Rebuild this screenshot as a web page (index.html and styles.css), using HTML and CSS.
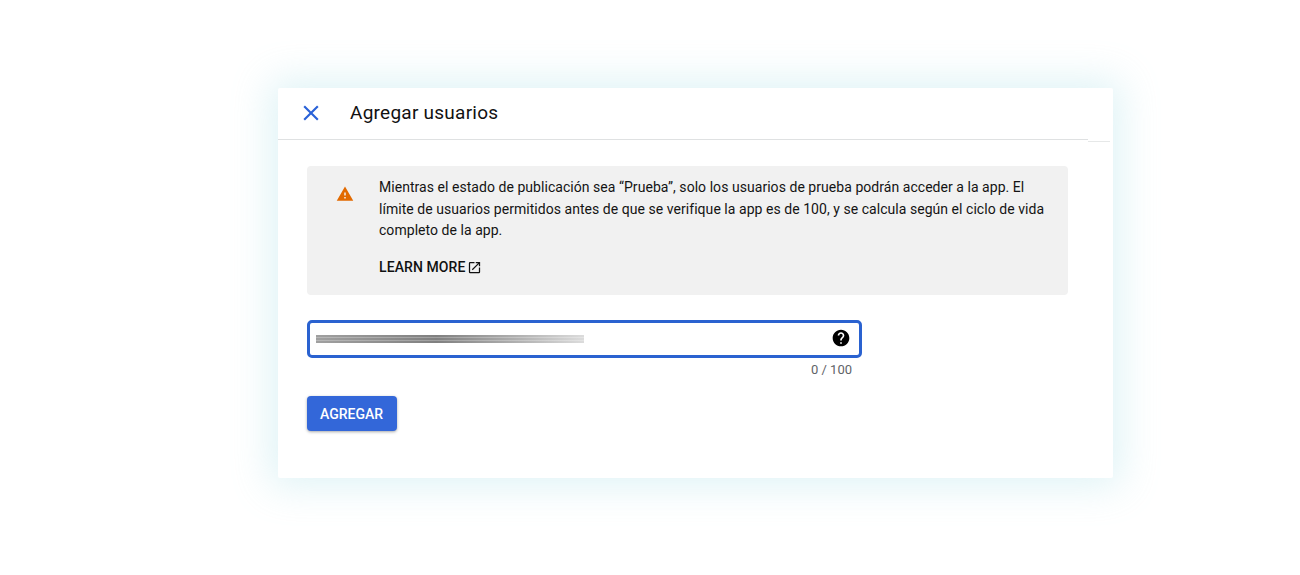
FILE: index.html
```html
<!DOCTYPE html>
<html lang="es">
<head>
<meta charset="utf-8">
<title>Agregar usuarios</title>
<link rel="stylesheet" href="styles.css">
</head>
<body>
<section class="card">
  <header class="header">
    <svg class="close" width="26" height="26" viewBox="0 0 24 24"><path d="M19 6.41 17.59 5 12 10.59 6.41 5 5 6.41 10.59 12 5 17.59 6.41 19 12 13.41 17.59 19 19 17.59 13.41 12z"/></svg>
    <h1 class="title">Agregar usuarios</h1>
  </header>
  <span class="ghost-line"></span>
  <div class="body">
    <div class="notice">
      <svg class="warn" width="18" height="18" viewBox="0 0 24 24"><path d="M1 21h22L12 2 1 21zm12-3h-2v-2h2v2zm0-4h-2v-4h2v4z"/></svg>
      <div class="notice-text">
        <p class="message">Mientras el estado de publicación sea “Prueba”, solo los usuarios de prueba podrán acceder a la app. El límite de usuarios permitidos antes de que se verifique la app es de 100, y se calcula según el ciclo de vida completo de la app.</p>
        <a class="learn">LEARN MORE<svg width="15" height="15" viewBox="0 0 24 24"><path d="M19 19H5V5h7V3H5a2 2 0 0 0-2 2v14a2 2 0 0 0 2 2h14a2 2 0 0 0 2-2v-7h-2v7zM14 3v2h3.59l-9.83 9.83 1.41 1.41L19 6.41V10h2V3h-7z"/></svg></a>
      </div>
    </div>
    <div class="field">
      <span class="smudge"></span>
      <svg class="help" width="20" height="20" viewBox="0 0 24 24"><path d="M12 2C6.48 2 2 6.48 2 12s4.48 10 10 10 10-4.48 10-10S17.52 2 12 2zm1 17h-2v-2h2v2zm2.07-7.75-.9.92C13.45 12.9 13 13.5 13 15h-2v-.5c0-1.1.45-2.1 1.17-2.83l1.24-1.26c.37-.36.59-.86.59-1.41 0-1.1-.9-2-2-2s-2 .9-2 2H8c0-2.21 1.79-4 4-4s4 1.79 4 4c0 .88-.36 1.68-.93 2.25z"/></svg>
    </div>
    <div class="counter">0 / 100</div>
    <button class="add" type="button">AGREGAR</button>
  </div>
</section>
</body>
</html>
```

FILE: styles.css
```css
* { box-sizing: border-box; }
html, body { margin: 0; height: 100%; overflow: hidden; background: #fff; }
body {
  padding: 88px 0 0 278px;
  font-family: Roboto, "Liberation Sans", sans-serif;
  color: #000;
}
.card {
  position: relative;
  width: 835px;
  height: 390px;
  background: #fff;
  border-radius: 2px;
  box-shadow: 0 0 38px 8px rgba(150, 215, 225, 0.3);
}
.header {
  display: flex;
  align-items: center;
  width: 810px;
  height: 52px;
  padding: 0 0 2px 20px;
  border-bottom: 1px solid #dfe1e2;
}
.close { fill: #2a62d8; flex: none; }
.title { margin: 0 0 0 26px; font-size: 19px; font-weight: 400; letter-spacing: 0.25px; color: #111; }
.ghost-line {
  position: absolute;
  left: 810px;
  top: 53px;
  width: 22px;
  height: 1px;
  background: #e6e8e8;
}
.body { padding: 26px 0 0 28.5px; }
.notice {
  display: flex;
  width: 761.5px;
  height: 129px;
  padding: 11px 20px 0 29px;
  background: #f1f1f1;
  border-radius: 4px;
}
.warn { fill: #e26a00; flex: none; margin-top: 8px; }
.notice-text { margin-left: 25.5px; }
.message { margin: 0; font-size: 14px; line-height: 21.5px; letter-spacing: 0.045px; color: #141414; }
.learn {
  display: flex;
  align-items: center;
  gap: 2px;
  margin-top: 15px;
  font-size: 14px;
  font-weight: 500;
  line-height: 21px;
  letter-spacing: 0.08px;
  color: #111;
}
.learn svg { fill: #111; }
.field {
  display: flex;
  align-items: center;
  justify-content: space-between;
  width: 555.5px;
  height: 38px;
  margin-top: 25px;
  padding: 0 8px 0 6.5px;
  border: 3px solid #2a62d0;
  border-radius: 5px;
}
.smudge {
  width: 268px;
  height: 8px;
  background: repeating-linear-gradient(180deg, rgba(255,255,255,0) 0 2px, rgba(255,255,255,0.25) 2px 3px), linear-gradient(90deg, #a0a0a0 0%, #808080 45%, #b0b0b0 75%, #dcdcdc 100%);
  filter: blur(0.6px);
}
.help { fill: #000; flex: none; margin-bottom: 2px; }
.counter {
  width: 545.5px;
  margin-top: 4px;
  text-align: right;
  font-size: 13px;
  line-height: 16px;
  color: #5f6368;
}
.add {
  display: block;
  width: 90px;
  height: 35px;
  margin-top: 18px;
  padding: 0;
  border: 0;
  border-radius: 4px;
  background: #3367d9;
  color: #fff;
  font: 500 14px Roboto, "Liberation Sans", sans-serif;
  box-shadow: 0 1px 3px rgba(60, 64, 67, 0.45);
}
```
